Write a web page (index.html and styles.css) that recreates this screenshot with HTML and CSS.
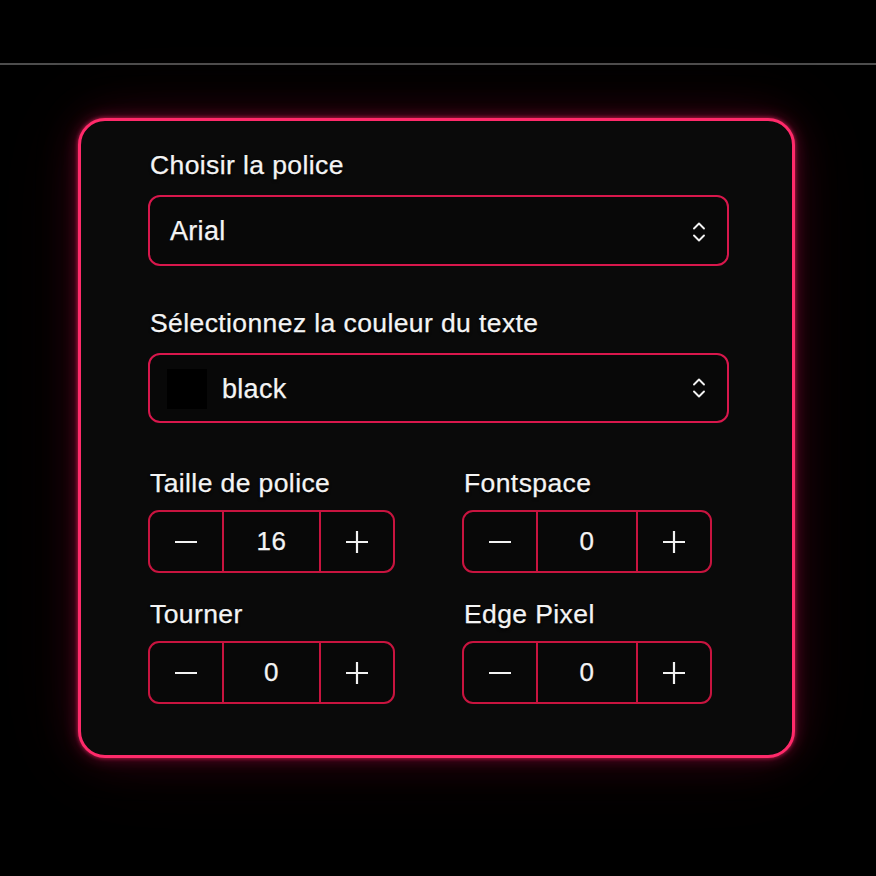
FILE: index.html
```html
<!DOCTYPE html>
<html lang="fr">
<head>
<meta charset="utf-8">
<title>Paramètres de texte</title>
<link rel="stylesheet" href="styles.css">
</head>
<body>
<header class="topbar"></header>
<main class="page">
  <section class="card">
    <label class="label">Choisir la police</label>
    <div class="select">
      <span class="select-text">Arial</span>
      <svg class="chevrons" viewBox="0 0 14 22" width="14" height="22"><path d="M2 7.5 L7 2.5 L12 7.5 M2 14.5 L7 19.5 L12 14.5" fill="none" stroke="#f2f2f2" stroke-width="1.9" stroke-linecap="round" stroke-linejoin="round"/></svg>
    </div>

    <label class="label label-second">Sélectionnez la couleur du texte</label>
    <div class="select select-color">
      <span class="swatch"></span>
      <span class="select-text">black</span>
      <svg class="chevrons" viewBox="0 0 14 22" width="14" height="22"><path d="M2 7.5 L7 2.5 L12 7.5 M2 14.5 L7 19.5 L12 14.5" fill="none" stroke="#f2f2f2" stroke-width="1.9" stroke-linecap="round" stroke-linejoin="round"/></svg>
    </div>

    <div class="grid">
      <div class="field">
        <label class="label">Taille de police</label>
        <div class="stepper">
          <button class="step"><svg viewBox="0 0 24 24" width="24" height="24"><path d="M1 12 H23" stroke="#f2f2f2" stroke-width="2.2"/></svg></button>
          <span class="value">16</span>
          <button class="step plus"><svg viewBox="0 0 24 24" width="24" height="24"><path d="M1 12 H23 M12 1 V23" stroke="#f2f2f2" stroke-width="2.2"/></svg></button>
        </div>
      </div>
      <div class="field">
        <label class="label">Fontspace</label>
        <div class="stepper">
          <button class="step"><svg viewBox="0 0 24 24" width="24" height="24"><path d="M1 12 H23" stroke="#f2f2f2" stroke-width="2.2"/></svg></button>
          <span class="value">0</span>
          <button class="step plus"><svg viewBox="0 0 24 24" width="24" height="24"><path d="M1 12 H23 M12 1 V23" stroke="#f2f2f2" stroke-width="2.2"/></svg></button>
        </div>
      </div>
      <div class="field field-second">
        <label class="label">Tourner</label>
        <div class="stepper">
          <button class="step"><svg viewBox="0 0 24 24" width="24" height="24"><path d="M1 12 H23" stroke="#f2f2f2" stroke-width="2.2"/></svg></button>
          <span class="value">0</span>
          <button class="step plus"><svg viewBox="0 0 24 24" width="24" height="24"><path d="M1 12 H23 M12 1 V23" stroke="#f2f2f2" stroke-width="2.2"/></svg></button>
        </div>
      </div>
      <div class="field field-second">
        <label class="label">Edge Pixel</label>
        <div class="stepper">
          <button class="step"><svg viewBox="0 0 24 24" width="24" height="24"><path d="M1 12 H23" stroke="#f2f2f2" stroke-width="2.2"/></svg></button>
          <span class="value">0</span>
          <button class="step plus"><svg viewBox="0 0 24 24" width="24" height="24"><path d="M1 12 H23 M12 1 V23" stroke="#f2f2f2" stroke-width="2.2"/></svg></button>
        </div>
      </div>
    </div>
  </section>
</main>
</body>
</html>
```

FILE: styles.css
```css
html, body {
  margin: 0;
  padding: 0;
  background: #000;
  height: 100%;
}

body {
  font-family: "Liberation Sans", Arial, sans-serif;
  color: #f4f4f4;
  overflow: hidden;
}

.topbar {
  height: 63px;
  border-bottom: 2px solid #4d4d4d;
  background: #000;
}

.page {
  padding-top: 53px;
  padding-left: 78px;
}

.card {
  box-sizing: border-box;
  width: 717px;
  height: 640px;
  border: 3px solid #ff2a6a;
  border-radius: 27px;
  background: #0a0a0a;
  box-shadow: 0 0 4px rgba(255, 42, 106, 0.7), 0 0 16px rgba(255, 30, 100, 0.3), 0 0 45px rgba(200, 20, 80, 0.2), 0 0 90px rgba(160, 10, 60, 0.12);
  padding: 29px 0 0 67px;
}

.label {
  display: block;
  font-size: 26.5px;
  letter-spacing: 0.4px;
  line-height: 30px;
  height: 30px;
  margin-bottom: 15px;
  padding-left: 2px;
  -webkit-text-stroke: 0.25px #f4f4f4;
  text-shadow: 0 2px 3px rgba(0, 0, 0, 0.9);
}

.label-second {
  margin-top: 42px;
}

.select {
  box-sizing: border-box;
  width: 581px;
  height: 71px;
  border: 2px solid #d8174c;
  border-radius: 12px;
  background: #080808;
  display: flex;
  align-items: center;
  padding: 2px 21px 0 20px;
}

.select-color {
  padding-left: 17px;
  padding-top: 0;
  height: 70px;
}

.select-text {
  flex: 1;
  font-size: 27px;
  letter-spacing: 0.3px;
  -webkit-text-stroke: 0.25px #f4f4f4;
}

.swatch {
  width: 40px;
  height: 40px;
  background: #000;
  margin-right: 15px;
  margin-top: 2px;
}

.select-color .select-text {
  padding-top: 2px;
}

.chevrons {
  display: block;
  flex: none;
}

.grid {
  display: grid;
  grid-template-columns: 247px 250px;
  column-gap: 67px;
  margin-top: 45px;
}

.field .label {
  margin-bottom: 12px;
}

.field-second {
  margin-top: 26px;
}

.stepper {
  box-sizing: border-box;
  height: 63px;
  border: 2px solid #c8143f;
  border-radius: 11px;
  display: grid;
  grid-template-columns: 72px 1fr 74px;
  background: #080808;
  overflow: hidden;
}

.step {
  border: 0;
  margin: 0;
  padding: 0;
  background: transparent;
  display: flex;
  align-items: center;
  justify-content: center;
  cursor: pointer;
}

.step svg {
  display: block;
}

.plus {
  border-left: 2px solid #c8143f;
}

.value {
  display: flex;
  align-items: center;
  justify-content: center;
  border-left: 2px solid #c8143f;
  font-size: 26px;
  letter-spacing: 0.5px;
  color: #f4f4f4;
  -webkit-text-stroke: 0.25px #f4f4f4;
}
```
